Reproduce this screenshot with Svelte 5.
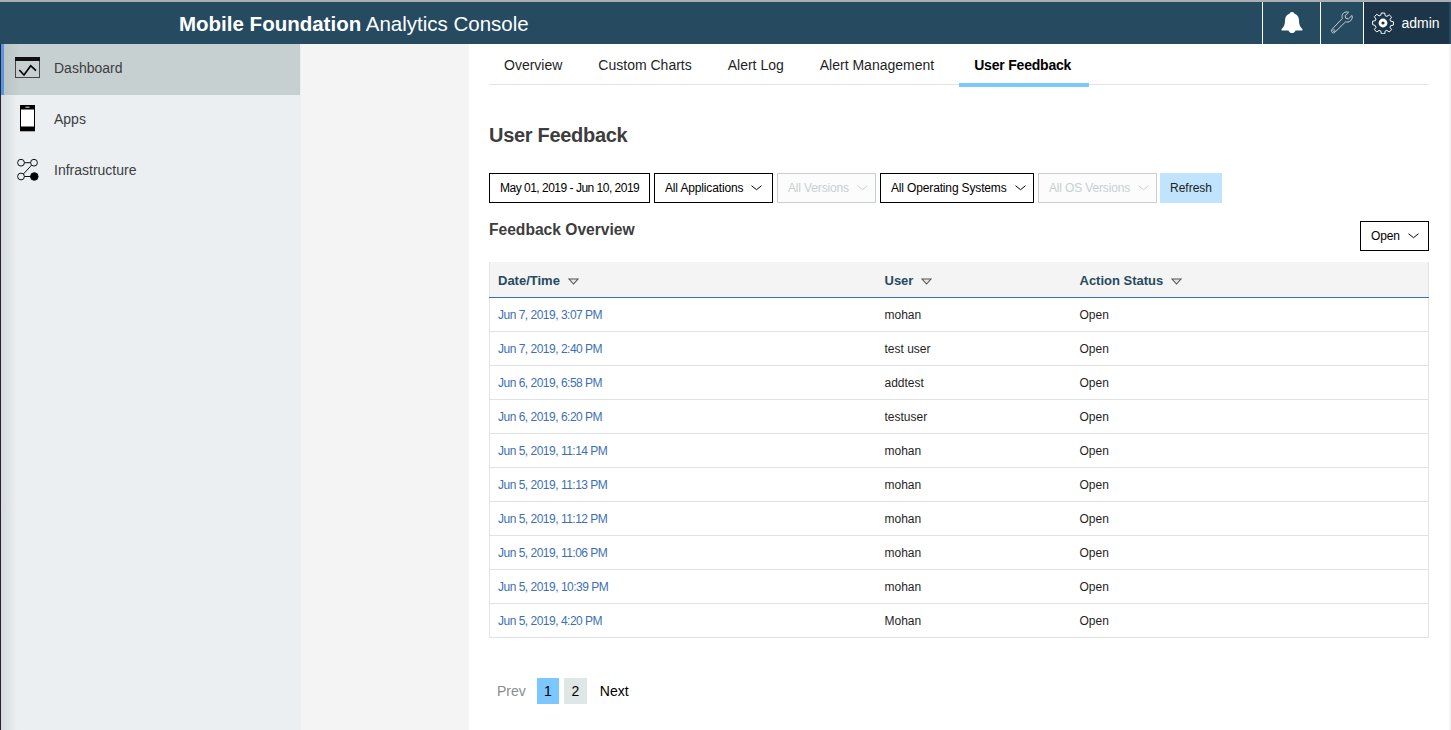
<script lang="ts">
  /** User feedback page of the analytics console. */
  const tabs = ['Overview', 'Custom Charts', 'Alert Log', 'Alert Management', 'User Feedback'];
  const columns = ['Date/Time', 'User', 'Action Status'];

  const rows = [
    { date: 'Jun 7, 2019, 3:07 PM', user: 'mohan' },
    { date: 'Jun 7, 2019, 2:40 PM', user: 'test user' },
    { date: 'Jun 6, 2019, 6:58 PM', user: 'addtest' },
    { date: 'Jun 6, 2019, 6:20 PM', user: 'testuser' },
    { date: 'Jun 5, 2019, 11:14 PM', user: 'mohan' },
    { date: 'Jun 5, 2019, 11:13 PM', user: 'mohan' },
    { date: 'Jun 5, 2019, 11:12 PM', user: 'mohan' },
    { date: 'Jun 5, 2019, 11:06 PM', user: 'mohan' },
    { date: 'Jun 5, 2019, 10:39 PM', user: 'mohan' },
    { date: 'Jun 5, 2019, 4:20 PM', user: 'Mohan' },
  ];
</script>

{#snippet chevron()}
  <svg class="chevron" width="11" height="6" viewBox="0 0 11 6"><path d="M.5 .7l5 4 5-4" fill="none" stroke="currentColor" stroke-width="1" /></svg>
{/snippet}

<div class="page">
  <header class="topbar">
    <div class="title"><strong>Mobile Foundation</strong> Analytics Console</div>
    <div class="tools">
      <div class="tool bell">
        <svg width="24" height="22" viewBox="0 0 24 22"><path d="M12 0c1.300 0 2.200.7 2.500 1.800C17.600 2.800 19 5.400 19 8.600c0 3.300.6 6 3.300 8.400.6.600.3 1.400-.5 1.400h-6.300c-.4 1.500-1.700 2.600-3.500 2.600s-3.100-1.100-3.500-2.600H2.200c-.8 0-1.100-.8-.5-1.400C4.400 14.600 5 11.900 5 8.600c0-3.200 1.400-5.800 4.500-6.800C9.800.7 10.700 0 12 0z" fill="#fff" /></svg>
      </div>
      <div class="tool wrench">
        <svg width="24" height="24" viewBox="0 0 24 24"><path d="M22 4.500l-3.600 3.400-2.600-.6-.7-2.600L18.600 1.300c-2.300-.9-4.900-.2-6 1.800-.8 1.400-.7 3-.2 4.300L2.100 18.200c-1 1-1 2.300-.2 3.100.9.900 2.200.8 3.100-.2L15.600 10.800c1.500.5 3.300.3 4.700-.8 1.700-1.400 2.400-3.500 1.700-5.500z" fill="none" stroke="#c5ced4" stroke-width="1" /><circle cx="3.800" cy="19.600" r="1" fill="none" stroke="#c5ced4" stroke-width=".8" /></svg>
      </div>
      <div class="tool user">
        <svg width="22" height="22" viewBox="0 0 22 22"><path d="M9.300 1h3.400l.5 2.700 1.700.7 2.300-1.600 2.400 2.400-1.600 2.300.7 1.700 2.700.5v3.400l-2.700.5-.7 1.700 1.600 2.300-2.400 2.400-2.300-1.600-1.700.7-.5 2.700H9.300l-.5-2.700-1.700-.7-2.300 1.600-2.400-2.400 1.600-2.300-.7-1.700L.6 12.600V9.200l2.700-.5.7-1.700-1.600-2.300 2.400-2.400 2.300 1.600 1.700-.7z" fill="none" stroke="#fff" stroke-width="1" /><circle cx="11" cy="11" r="3" fill="none" stroke="#fff" stroke-width="2.800" /></svg>
        <span>admin</span>
      </div>
    </div>
  </header>

  <div class="body">
    <nav class="sidebar">
      <a class="nav-item active" href="#dashboard">
        <svg width="26" height="21" viewBox="0 0 26 21"><rect x=".5" y=".5" width="24" height="20" fill="none" stroke="#444" /><rect width="25" height="4" fill="#111" /><path d="M4.300 13L9 18l6.700-9.300L21 13.700" fill="none" stroke="#000" stroke-width="1.700" /></svg>
        <span>Dashboard</span>
      </a>
      <a class="nav-item" href="#apps">
        <svg width="26" height="27" viewBox="0 0 26 27"><rect x="5.500" y=".5" width="14" height="26" fill="#fff" stroke="#000" /><rect x="5" width="15" height="4.500" fill="#000" /><rect x="5" y="21.500" width="15" height="4.500" fill="#000" /><rect x="10.500" y="1.500" width="4" height="1.500" fill="#999" /><rect x="5" y="26" width="15" height="1" fill="#aaa" /></svg>
        <span>Apps</span>
      </a>
      <a class="nav-item" href="#infrastructure">
        <svg width="26" height="24" viewBox="0 0 26 24" fill="none" stroke="#111" stroke-width="1"><circle cx="6" cy="4.700" r="3.400" /><circle cx="19" cy="4.700" r="3.400" /><circle cx="6" cy="18.500" r="3.400" /><circle cx="19.300" cy="18.500" r="3.800" fill="#000" /><path d="M9.400 4.700h6.200M9.400 18.500h6.500M8.400 16L16.600 7.200" /></svg>
        <span>Infrastructure</span>
      </a>
    </nav>

    <div class="spacer"></div>

    <main class="content">
      <div class="tabs">
        {#each tabs as tab}
          <div class="tab" class:selected={tab === 'User Feedback'}>{tab}</div>
        {/each}
      </div>

      <h1>User Feedback</h1>

      <div class="filters">
        <div class="select date">May 01, 2019 - Jun 10, 2019</div>
        <div class="select apps">All Applications {@render chevron()}</div>
        <div class="select off versions">All Versions {@render chevron()}</div>
        <div class="select os">All Operating Systems {@render chevron()}</div>
        <div class="select off osv">All OS Versions {@render chevron()}</div>
        <div class="refresh">Refresh</div>
      </div>

      <div class="overview">
        <h2>Feedback Overview</h2>
        <div class="select status">Open {@render chevron()}</div>
      </div>

      <table>
        <thead>
          <tr>
            {#each columns as col}
              <th>
                {col}
                <svg class="sort" width="11" height="7" viewBox="0 0 11 7"><path d="M1 1h9L5.500 6z" fill="#e6e6e6" stroke="#555" stroke-width="1.100" /></svg>
              </th>
            {/each}
          </tr>
        </thead>
        <tbody>
          {#each rows as row}
            <tr>
              <td class="link">{row.date}</td>
              <td>{row.user}</td>
              <td>Open</td>
            </tr>
          {/each}
        </tbody>
      </table>

      <div class="pager">
        <span class="prev">Prev</span>
        <span class="page-num current">1</span>
        <span class="page-num second">2</span>
        <span class="next">Next</span>
      </div>
    </main>

    <div class="edge"></div>
  </div>
</div>

<style>
  :global(body) { margin: 0; font-family: "Liberation Sans", Arial, sans-serif; overflow: hidden; }

  .page { width: 1451px; height: 730px; display: flex; flex-direction: column; background: #f4f4f4; }

  .topbar { height: 42px; flex: none; display: flex; justify-content: space-between; background: #264a60; border-top: 2px solid #a9aeb2; }
  .title { margin-left: 179px; line-height: 43px; font-size: 20.500px; color: #fff; }
  .tools { display: flex; margin-right: 2px; }
  .tool { display: flex; align-items: center; justify-content: center; border-left: 1px solid #fff; }
  .bell { width: 57px; }
  .wrench { width: 42px; }
  .user { width: 86px; gap: 7px; background: #1c3548; color: #fff; font-size: 14px; padding-right: 1px; box-sizing: border-box; }

  .body { flex: 1; display: flex; min-height: 0; }

  .sidebar { width: 300px; flex: none; border-left: 1px solid #2b2230; background: linear-gradient(90deg, #d6dbdf 0, #ebeff2 16px); }
  .nav-item { height: 51px; display: flex; align-items: center; gap: 13px; padding: 0 0 4px 14px; box-sizing: border-box; color: #3d3d3d; font-size: 14px; text-decoration: none; }
  .nav-item svg { flex: none; }
  .nav-item.active { background: linear-gradient(90deg, #bcc5c6 0, #c7d0d1 16px); border-left: 3px solid #5596e6; padding-left: 11px; width: 299px; }

  .spacer { width: 168px; flex: none; }

  .content { width: 980px; flex: none; box-sizing: border-box; padding: 0 20px; background: #fff; color: #000; }

  .tabs { display: flex; height: 40px; border-bottom: 1px solid #dfe6e6; }
  .tab { height: 43px; box-sizing: border-box; padding: 0 15px; margin-right: 6px; line-height: 42px; font-size: 14px; color: #1f1f1f; }
  .tab.selected { font-weight: 700; letter-spacing: -0.2px; color: #000; border-bottom: 4px solid #7cc7ff; margin-left: 4px; padding: 0 18px 0 15px; }

  h1 { margin: 37px 0 25px; font-size: 20px; line-height: 26px; font-weight: 700; letter-spacing: -0.3px; color: #3d3d3d; }

  .filters { display: flex; gap: 4px; height: 30px; }
  .select { height: 30px; box-sizing: border-box; display: flex; align-items: center; gap: 8px; padding: 0 10px; border: 1px solid #000; font-size: 12px; letter-spacing: -0.15px; color: #000; background: #fff; white-space: nowrap; }
  .select.off { border-color: #c7cfd1; color: #c7cfd1; background: #fcfcfc; }
  .date { width: 161px; letter-spacing: -0.5px; }
  .apps { width: 119px; }
  .versions { width: 99px; }
  .os { width: 154px; }
  .osv { width: 119px; margin-right: -1px; }
  .status { width: 69px; }
  .chevron { flex: none; }
  .refresh { width: 62px; height: 30px; line-height: 30px; text-align: center; font-size: 12px; color: #222; background: #c0e4fe; }

  .overview { display: flex; justify-content: space-between; height: 41px; margin-top: 17px; margin-bottom: 1px; }
  .overview .select { margin-top: 1px; }
  h2 { margin: 0; font-size: 15.600px; line-height: 20px; font-weight: 700; color: #3d3d3d; }

  table { width: 100%; border-collapse: collapse; table-layout: fixed; border: 1px solid #dfe6e6; border-top: 0; font-size: 12px; }
  th { height: 35px; padding: 3px 0 0 8px; text-align: left; font-size: 13px; font-weight: 700; color: #264a60; background: #f4f4f4; border-bottom: 1px solid #3d70b2; box-sizing: border-box; }
  th:first-child { width: 387px; }
  th:nth-child(2) { width: 195px; }
  .sort { margin-left: 4px; }
  td { height: 34px; padding: 1px 0 0 8px; box-sizing: border-box; border-bottom: 1px solid #dfe3e6; color: #1f1f1f; }
  td.link { color: #3d70b2; letter-spacing: -0.5px; }

  .pager { display: flex; align-items: center; margin: 40px 0 0 8px; font-size: 14px; height: 26px; }
  .prev { color: #8c8c8c; margin-right: 11px; }
  .page-num { width: 22px; height: 26px; line-height: 26px; text-align: center; background: #7cc7ff; margin-right: 5px; color: #000; }
  .page-num.second { width: 23px; background: #dfe6e6; }
  .next { margin-left: 8px; color: #000; }

  .edge { flex: 1; background: #f4f4f4; }
</style>
